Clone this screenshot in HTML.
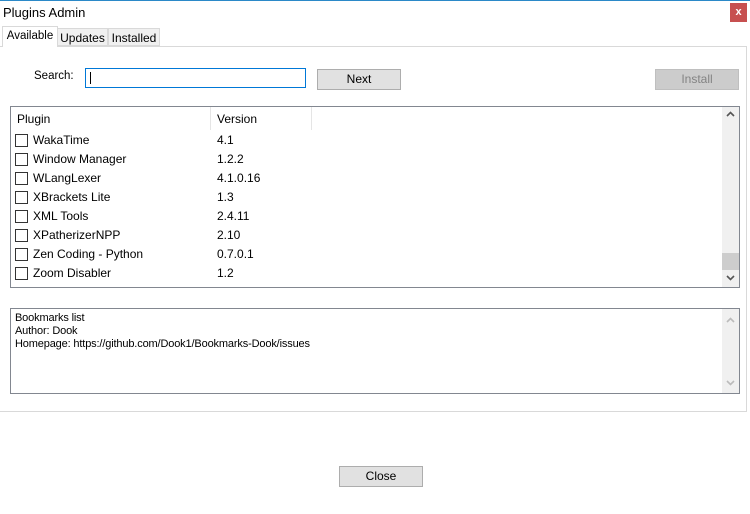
<!DOCTYPE html>
<html><head><style>
body{margin:0;width:750px;height:514px;background:#fff;font-family:"Liberation Sans",sans-serif;font-size:12px;color:#000;position:relative;overflow:hidden}
.a{position:absolute}
.btn{position:absolute;background:#e1e1e1;border:1px solid #adadad;box-sizing:border-box;text-align:center;font-size:12px;line-height:19px}
.row{position:absolute;left:15px;height:19px;line-height:19px;font-size:12px}
.cb{position:absolute;left:0;top:3px;width:11px;height:11px;border:1px solid #333;background:#fff}
.nm{position:absolute;left:18px;white-space:nowrap}
.vr{position:absolute;left:202px;white-space:nowrap}
</style></head><body>
<div class="a" style="left:0;top:0;width:750px;height:1px;background:#2b89c8"></div>
<div class="a" style="left:3px;top:5px;font-size:13px">Plugins Admin</div>
<div class="a" style="left:730px;top:3px;width:17px;height:19px;background:#c75050;color:#fff;font-size:11px;font-weight:bold;text-align:center;line-height:19px">x</div>
<div class="a" style="left:0;top:46px;width:747px;height:366px;border:1px solid #d9d9d9;border-left:none;box-sizing:border-box;background:#fff"></div>
<div class="a" style="left:57px;top:28px;width:51px;height:18px;background:#f0f0f0;border:1px solid #d9d9d9;box-sizing:border-box;text-align:center;line-height:18px">Updates</div>
<div class="a" style="left:108px;top:28px;width:52px;height:18px;background:#f0f0f0;border:1px solid #d9d9d9;box-sizing:border-box;text-align:center;line-height:18px">Installed</div>
<div class="a" style="left:2px;top:26px;width:56px;height:21px;background:#fff;border:1px solid #d9d9d9;border-bottom:none;box-sizing:border-box;text-align:center;line-height:18px;font-size:11.5px">Available</div>
<div class="a" style="left:34px;top:70px;font-size:11.5px">Search:</div>
<div class="a" style="left:85px;top:68px;width:221px;height:20px;border:1px solid #0078d7;box-sizing:border-box"><div class="a" style="left:4px;top:3px;width:1px;height:12px;background:#000"></div></div>
<div class="btn" style="left:317px;top:69px;width:84px;height:21px">Next</div>
<div class="btn" style="left:655px;top:69px;width:84px;height:21px;background:#cccccc;border-color:#bfbfbf;color:#838383">Install</div>
<div class="a" style="left:10px;top:106px;width:730px;height:182px;border:1px solid #828790;box-sizing:border-box;overflow:hidden">
 <div class="a" style="left:6px;top:5px">Plugin</div>
 <div class="a" style="left:199px;top:0;width:1px;height:23px;background:#e5e5e5"></div>
 <div class="a" style="left:206px;top:5px">Version</div>
 <div class="a" style="left:300px;top:0;width:1px;height:23px;background:#e5e5e5"></div>
 <div class="a" style="left:711px;top:0;width:17px;height:180px;background:#f0f0f0"></div>
 <div class="a" style="left:711px;top:146px;width:17px;height:17px;background:#cdcdcd"></div>
 <svg class="a" style="left:715px;top:4px" width="9" height="6"><path d="M1 5L4.5 1.5L8 5" stroke="#555" stroke-width="1.6" fill="none"/></svg>
 <svg class="a" style="left:715px;top:168px" width="9" height="6"><path d="M1 1L4.5 4.5L8 1" stroke="#555" stroke-width="1.6" fill="none"/></svg>
</div>
<div class="row" style="top:131px"><div class="cb"></div><div class="nm">WakaTime</div><div class="vr">4.1</div></div>
<div class="row" style="top:150px"><div class="cb"></div><div class="nm">Window Manager</div><div class="vr">1.2.2</div></div>
<div class="row" style="top:169px"><div class="cb"></div><div class="nm">WLangLexer</div><div class="vr">4.1.0.16</div></div>
<div class="row" style="top:188px"><div class="cb"></div><div class="nm">XBrackets Lite</div><div class="vr">1.3</div></div>
<div class="row" style="top:207px"><div class="cb"></div><div class="nm">XML Tools</div><div class="vr">2.4.11</div></div>
<div class="row" style="top:226px"><div class="cb"></div><div class="nm">XPatherizerNPP</div><div class="vr">2.10</div></div>
<div class="row" style="top:245px"><div class="cb"></div><div class="nm">Zen Coding - Python</div><div class="vr">0.7.0.1</div></div>
<div class="row" style="top:264px"><div class="cb"></div><div class="nm">Zoom Disabler</div><div class="vr">1.2</div></div>
<div class="a" style="left:10px;top:308px;width:730px;height:86px;border:1px solid #828790;box-sizing:border-box">
 <div class="a" style="left:711px;top:0;width:17px;height:84px;background:#f0f0f0"></div>
 <svg class="a" style="left:715px;top:8px" width="9" height="6"><path d="M1 5L4.5 1.5L8 5" stroke="#bbb" stroke-width="1.6" fill="none"/></svg>
 <svg class="a" style="left:715px;top:71px" width="9" height="6"><path d="M1 1L4.5 4.5L8 1" stroke="#bbb" stroke-width="1.6" fill="none"/></svg>
 <div class="a" style="left:4px;top:3px;font-size:11px;line-height:13px;letter-spacing:-0.15px">Bookmarks list<br>Author: Dook<br>Homepage: https://github.com/Dook1/Bookmarks-Dook/issues</div>
</div>
<div class="btn" style="left:339px;top:466px;width:84px;height:21px">Close</div>
</body></html>
